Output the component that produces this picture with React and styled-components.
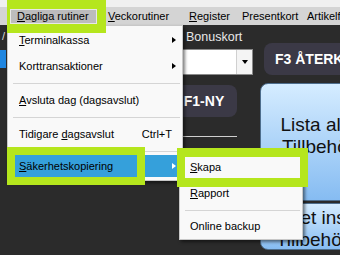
import styled, { createGlobalStyle } from 'styled-components';

const GlobalStyle = createGlobalStyle`
  body {
    margin: 0;
    background-color: #2b2b2b;
  }
`;

const Page = styled.div`
  position: relative;
  width: 340px;
  height: 255px;
  overflow: hidden;
  background-color: #2b2b2b;
  font-family: "Liberation Sans", Arial, sans-serif;
`;

const TopStrip = styled.div`
  height: 7px;
  background-color: #f0f0f0;
`;

const MenuBar = styled.div`
  display: flex;
  align-items: center;
  height: 18px;
  padding-left: 10px;
  background-color: #d4d4d4;
`;

const BarItem = styled.div`
  box-sizing: border-box;
  flex-shrink: 0;
  width: ${(p) => p.$w}px;
  height: 15px;
  padding-left: ${(p) => (p.$active ? 6 : p.$pl || 7)}px;
  padding-top: ${(p) => (p.$active ? 0 : 1)}px;
  font-size: 11px;
  line-height: 13px;
  color: #000;
  white-space: nowrap;
  background-color: ${(p) => (p.$active ? '#bcbcbc' : 'transparent')};
  border: ${(p) => (p.$active ? '1px solid #e8e8e8' : 'none')};
`;

const Workspace = styled.div`
  display: flex;
  height: 230px;
`;

const LeftCol = styled.div`
  display: flex;
  flex-direction: column;
  flex-shrink: 0;
  width: 150px;
`;

const Slash = styled.span`
  margin: 6px 0 0 2px;
  font-size: 11px;
  line-height: 10px;
  color: #dcdcdc;
`;

const BlueTab = styled.div`
  width: 6px;
  height: 18px;
  margin-top: 9px;
  background-color: #1f86e0;
`;

const MidCol = styled.div`
  display: flex;
  flex-direction: column;
  flex-shrink: 0;
  width: 103px;
`;

const FieldLabel = styled.div`
  height: 24px;
  padding-left: 36px;
  font-size: 12.5px;
  line-height: 25px;
  color: #e8e8e8;
`;

const Combo = styled.div`
  box-sizing: border-box;
  display: flex;
  justify-content: flex-end;
  height: 26px;
  background-color: #fff;
  border: 1px solid #8a8a8a;
`;

const ComboButton = styled.div`
  display: flex;
  align-items: center;
  justify-content: center;
  width: 15px;
  background-color: #f4f4f4;
  border-left: 1px solid #d0d0d0;
`;

const Caret = styled.span`
  width: 0;
  height: 0;
  border-top: 4px solid #000;
  border-left: 3px solid transparent;
  border-right: 3px solid transparent;
`;

const DarkButton = styled.div`
  box-sizing: border-box;
  display: flex;
  align-items: center;
  justify-content: ${(p) => (p.$left ? 'flex-start' : 'center')};
  flex-shrink: 0;
  width: ${(p) => p.$w}px;
  height: 32px;
  margin-left: ${(p) => p.$ml}px;
  margin-top: ${(p) => p.$mt || 0}px;
  padding-left: ${(p) => (p.$left ? 11 : 0)}px;
  background-color: #3b3946;
  border-radius: 8px;
  color: #fff;
  font-weight: 700;
  font-size: 14px;
  white-space: nowrap;
`;

const Rule = styled.div`
  width: 87px;
  height: 1px;
  margin-top: ${(p) => p.$mt}px;
  background-color: #cfcfcf;
`;

const RightCol = styled.div`
  display: flex;
  flex-direction: column;
  flex-shrink: 0;
  width: 150px;
  padding: 18px 0 0 7px;
`;

const Tile = styled.div`
  box-sizing: border-box;
  display: flex;
  flex-direction: column;
  justify-content: center;
  width: 116px;
  height: ${(p) => p.$h}px;
  margin-top: ${(p) => p.$mt}px;
  padding-top: ${(p) => p.$pt || 0}px;
  padding-bottom: ${(p) => p.$pb || 0}px;
  padding-right: ${(p) => p.$pr || 0}px;
  background: linear-gradient(#d5ecff, #86bcf2);
  border: 1px solid #4d6d8c;
  border-radius: 8px;
  color: #111;
  font-size: 19px;
  line-height: 22px;
  text-align: center;
  white-space: nowrap;
`;

const Dropdown = styled.div`
  position: absolute;
  left: ${(p) => p.$x}px;
  top: ${(p) => p.$y}px;
  box-sizing: border-box;
  width: ${(p) => p.$w}px;
  padding: ${(p) => p.$pad};
  background-color: #f9f9f9;
  border: 1px solid #c8c8c8;
  box-shadow: 2px 2px 3px rgba(0, 0, 0, 0.5);
`;

const MenuItem = styled.div`
  display: flex;
  align-items: center;
  height: ${(p) => p.$h || 26}px;
  margin: 0 1px;
  padding-left: ${(p) => p.$pl}px;
  background-color: ${(p) => (p.$hover ? '#35a0db' : 'transparent')};
  font-size: 11px;
  color: #000;
  white-space: nowrap;
`;

const ItemLabel = styled.span`
  flex: 1;
`;

const Shortcut = styled.span`
  margin-right: 9px;
`;

const Arrow = styled.span`
  width: 0;
  height: 0;
  margin-right: 5px;
  border-left: 4px solid ${(p) => (p.$light ? '#fff' : '#000')};
  border-top: 3.5px solid transparent;
  border-bottom: 3.5px solid transparent;
`;

const Sep = styled.div`
  display: flex;
  align-items: center;
  height: 8px;
  margin: 0 2px 0 5px;

  &::before {
    content: '';
    flex: 1;
    height: 1px;
    background-color: #d5d5d5;
  }
`;

const Mark = styled.div`
  position: absolute;
  left: ${(p) => p.$x}px;
  top: ${(p) => p.$y}px;
  box-sizing: border-box;
  width: ${(p) => p.$w}px;
  height: ${(p) => p.$h}px;
  border-style: solid;
  border-color: #b5e61d;
  border-width: ${(p) => p.$bw};
`;

export default function App() {
  return (
    <Page>
      <GlobalStyle />
      <TopStrip />
      <MenuBar>
        <BarItem $w={87} $active>
          <u>D</u>agliga rutiner
        </BarItem>
        <BarItem $w={85} $pl={11}>
          <u>V</u>eckorutiner
        </BarItem>
        <BarItem $w={53}>
          <u>R</u>egister
        </BarItem>
        <BarItem $w={65}>Presentkort</BarItem>
        <BarItem $w={60}>Artikelfunktioner</BarItem>
      </MenuBar>

      <Workspace>
        <LeftCol>
          <Slash>/</Slash>
          <BlueTab />
        </LeftCol>

        <MidCol>
          <FieldLabel>Bonuskort</FieldLabel>
          <Combo>
            <ComboButton>
              <Caret />
            </ComboButton>
          </Combo>
          <DarkButton $w={66} $ml={21} $mt={10}>
            F1-NY
          </DarkButton>
          <Rule $mt={19} />
        </MidCol>

        <RightCol>
          <DarkButton $w={140} $ml={4} $left>
            F3 ÅTERKÖP
          </DarkButton>
          <Tile $h={118} $mt={8} $pb={12}>
            <span>Lista alla</span>
            <span>Tillbehör</span>
          </Tile>
          <Tile $h={47} $mt={2} $pt={4} $pr={12}>
            <span>Paket inst.</span>
            <span>Tillbehör</span>
          </Tile>
        </RightCol>
      </Workspace>

      <Dropdown $x={7} $y={25} $w={176} $pad="1px 0 3px">
        <MenuItem $pl={10}>
          <ItemLabel>
            <u>T</u>erminalkassa
          </ItemLabel>
          <Arrow />
        </MenuItem>
        <MenuItem $pl={10}>
          <ItemLabel>Korttransaktioner</ItemLabel>
          <Arrow />
        </MenuItem>
        <Sep />
        <MenuItem $pl={10}>
          <ItemLabel>
            <u>A</u>vsluta dag (dagsavslut)
          </ItemLabel>
        </MenuItem>
        <Sep />
        <MenuItem $pl={10}>
          <ItemLabel>
            Tidigare <u>d</u>agsavslut
          </ItemLabel>
          <Shortcut>Ctrl+T</Shortcut>
        </MenuItem>
        <Sep />
        <MenuItem $pl={10} $h={22} $hover>
          <ItemLabel>
            <u>S</u>äkerhetskopiering
          </ItemLabel>
          <Arrow $light />
        </MenuItem>
      </Dropdown>

      <Dropdown $x={179} $y={150} $w={124} $pad="3px 0 1px">
        <MenuItem $pl={9}>
          <ItemLabel>
            <u>S</u>kapa
          </ItemLabel>
        </MenuItem>
        <MenuItem $pl={9}>
          <ItemLabel>
            <u>R</u>apport
          </ItemLabel>
        </MenuItem>
        <Sep />
        <MenuItem $pl={9} $h={24}>
          <ItemLabel>Online backup</ItemLabel>
        </MenuItem>
      </Dropdown>

      <Mark $x={7} $y={0} $w={99} $h={33} $bw="9px 9px 9px 3px" />
      <Mark $x={7} $y={147} $w={138} $h={38} $bw="8px" />
      <Mark $x={177} $y={148} $w={131} $h={39} $bw="9px 8px" />
    </Page>
  );
}
